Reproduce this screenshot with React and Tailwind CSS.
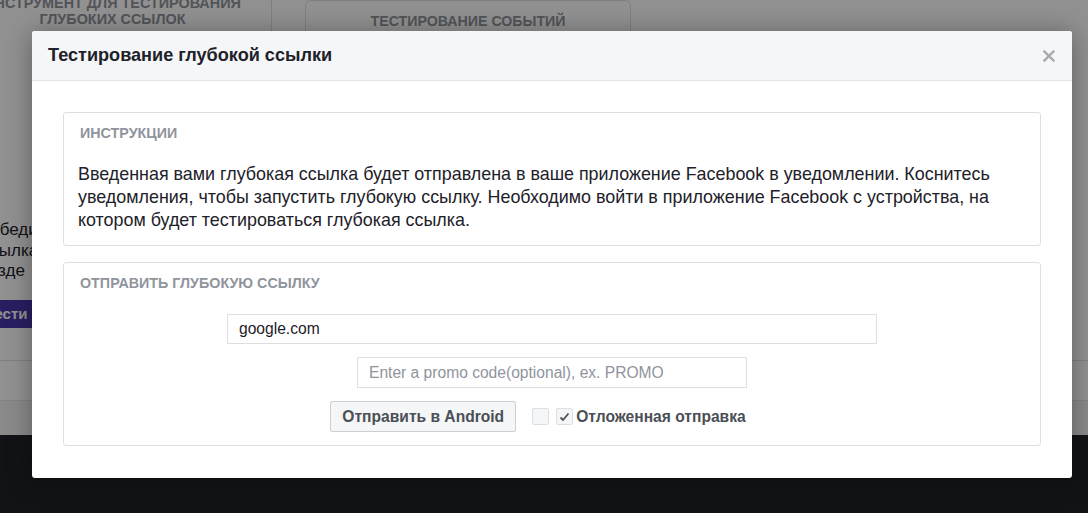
import { useState } from 'react';

const font = { fontFamily: '"Liberation Sans", Arial, sans-serif' };

const Panel = ({ title, children, className = '' }) => (
  <div className={`border border-[#dddfe2] rounded-[3px] bg-white ${className}`}>
    <div className="px-4 pt-[12px] text-[14.3px] font-bold text-[#90949c] uppercase leading-[16px]">{title}</div>
    {children}
  </div>
);

export default function App() {
  const [link, setLink] = useState('google.com');
  const [promo, setPromo] = useState('');
  const [deferred, setDeferred] = useState(true);

  return (
    <div className="relative w-[1088px] h-[513px] overflow-hidden bg-white" style={font}>
      {/* page behind the dialog */}
      <div className="flex flex-col h-full">
        <div className="flex h-[100px] gap-[33px]">
          <div className="shrink-0 -ml-[40px] w-[312px] pr-[6px] border-r border-[#dddfe2] text-center whitespace-nowrap text-[14.4px] font-bold text-[#90949c] leading-[16px] -mt-[5px] uppercase">
            Инструмент для тестирования<br />глубоких ссылок
          </div>
          <div className="w-[326px] border border-[#dddfe2] rounded-t-[6px] text-center text-[14.2px] font-bold text-[#90949c] pt-[10px] uppercase">
            Тестирование событий
          </div>
        </div>
        <div className="flex-1 flex flex-col pt-[120px]">
          <div className="-ml-[22px] text-[17px] leading-[20.5px] text-[#1d2129]">
            <div>Победи</div>
            <div>Ссылка</div>
            <div>Разде</div>
          </div>
          <div className="mt-[18px] w-[80px] -ml-[14px] h-[28px] bg-[#4a36ad] text-white text-[15px] font-bold leading-[28px]">Тести</div>
          <div className="mt-[32px] border-t border-[#dddfe2]" />
          <div className="mt-[39px] h-[35px] bg-[#f2f2f2] border-t border-[#e5e5e5]" />
          <div className="flex-1 bg-[#202328]" />
        </div>
      </div>

      {/* overlay */}
      <div className="absolute inset-0 bg-black/[0.43]" />

      {/* dialog */}
      <div className="absolute left-[32px] top-[31px] w-[1040px] h-[447px] bg-white rounded-[3px] shadow-[0_2px_26px_rgba(0,0,0,0.35)] flex flex-col">
        <div className="h-[50px] shrink-0 bg-[#f5f6f7] border-b border-[#e5e5e5] rounded-t-[3px] flex items-center justify-between pl-4 pr-[17px]">
          <h2 className="text-[18.1px] font-bold text-[#1d2129]">Тестирование глубокой ссылки</h2>
          <button className="text-[#a7abb1]" aria-label="Закрыть">
            <svg width="12" height="12" viewBox="0 0 12 12">
              <path d="M1.5 1.5 L10.5 10.5 M10.5 1.5 L1.5 10.5" stroke="currentColor" strokeWidth="2.4" strokeLinecap="square" />
            </svg>
          </button>
        </div>

        <div className="px-[31px] pt-[31px] flex flex-col gap-4">
          <Panel title="Инструкции" className="h-[134px]">
            <p className="pl-[14px] pr-4 pt-[22px] text-[17.9px] leading-[23px] text-[#1d2129]">
              Введенная вами глубокая ссылка будет отправлена в ваше приложение Facebook в уведомлении. Коснитесь уведомления, чтобы запустить глубокую ссылку. Необходимо войти в приложение Facebook с устройства, на котором будет тестироваться глубокая ссылка.
            </p>
          </Panel>

          <Panel title="Отправить глубокую ссылку" className="h-[184px]">
            <div className="flex flex-col items-center pt-[23px]">
              <input
                value={link}
                onChange={(e) => setLink(e.target.value)}
                className="w-[650px] h-[30px] border border-[#dddfe2] px-[11px] text-[15.6px] text-[#1d2129] outline-none"
                style={font}
              />
              <input
                value={promo}
                onChange={(e) => setPromo(e.target.value)}
                placeholder="Enter a promo code(optional), ex. PROMO"
                className="mt-[13px] w-[390px] h-[31px] border border-[#dddfe2] px-[11px] text-[15.6px] text-[#1d2129] placeholder:text-[#90949c] outline-none"
                style={font}
              />
              <div className="mt-[13px] flex items-center -translate-x-[14px]">
                <button className="h-[31px] px-[11px] bg-[#f5f6f7] border border-[#ccd0d5] rounded-[2px] text-[15.6px] font-bold text-[#4b4f56]">
                  Отправить в Android
                </button>
                <span className="ml-[16px] w-[17px] h-[17px] border border-[#dddfe2] rounded-[2px] bg-[#f5f6f7]" />
                <button
                  onClick={() => setDeferred(!deferred)}
                  className="ml-[7px] w-[17px] h-[17px] border border-[#dddfe2] rounded-[2px] bg-[#f5f6f7] flex items-center justify-center"
                >
                  {deferred && (
                    <svg width="11" height="10" viewBox="0 0 11 10">
                      <path d="M1.5 5.5 L4 8 L9.5 1.5" fill="none" stroke="#4b4f56" strokeWidth="1.8" />
                    </svg>
                  )}
                </button>
                <span className="ml-[3px] text-[15.6px] font-bold text-[#4b4f56]">Отложенная отправка</span>
              </div>
            </div>
          </Panel>
        </div>
      </div>
    </div>
  );
}
